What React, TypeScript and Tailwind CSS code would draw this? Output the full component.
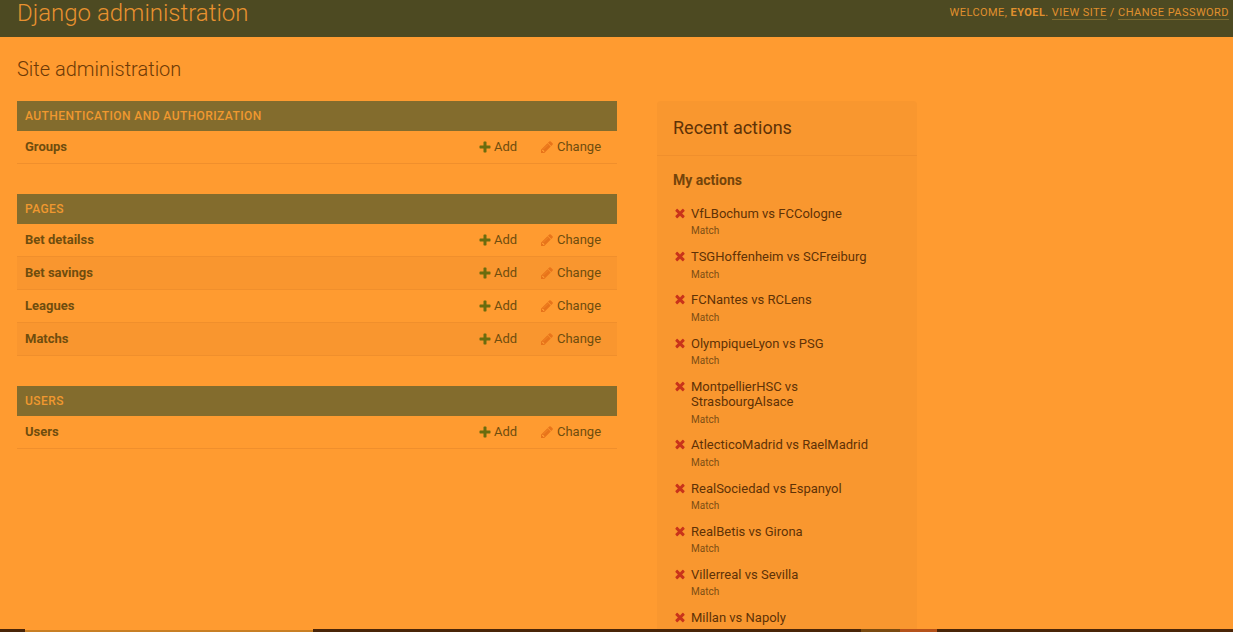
const modules = [
  { title: "AUTHENTICATION AND AUTHORIZATION", rows: ["Groups"] },
  { title: "PAGES", rows: ["Bet detailss", "Bet savings", "Leagues", "Matchs"] },
  { title: "USERS", rows: ["Users"] },
];

const actions = [
  "VfLBochum vs FCCologne",
  "TSGHoffenheim vs SCFreiburg",
  "FCNantes vs RCLens",
  "OlympiqueLyon vs PSG",
  "MontpellierHSC vs StrasbourgAlsace",
  "AtlecticoMadrid vs RaelMadrid",
  "RealSociedad vs Espanyol",
  "RealBetis vs Girona",
  "Villerreal vs Sevilla",
  "Millan vs Napoly",
];

function Icon({ d, className }: { d: string; className: string }) {
  return (
    <svg viewBox="0 0 1792 1792" className={className} fill="currentColor" aria-hidden="true">
      <path d={d} />
    </svg>
  );
}

const ADD =
  "M1600 796v192q0 40-28 68t-68 28h-416v416q0 40-28 68t-68 28h-192q-40 0-68-28t-28-68v-416h-416q-40 0-68-28t-28-68v-192q0-40 28-68t68-28h416v-416q0-40 28-68t68-28h192q40 0 68 28t28 68v416h416q40 0 68 28t28 68z";
const CHANGE =
  "M491 1536l91-91-235-235-91 91v107h128v128h107zm523-928q0-22-22-22-10 0-17 7l-542 542q-7 7-7 17 0 22 22 22 10 0 17-7l542-542q7-7 7-17zm-54-192l416 416-832 832h-416v-416zm683 96q0 53-37 90l-166 166-416-416 166-165q36-38 90-38 53 0 91 38l235 234q37 39 37 91z";
const DELETE =
  "M1490 1322q0 40-28 68l-136 136q-28 28-68 28t-68-28l-294-294-294 294q-28 28-68 28t-68-28l-136-136q-28-28-28-68t28-68l294-294-294-294q-28-28-28-68t28-68l136-136q28-28 68-28t68 28l294 294 294-294q28-28 68-28t68 28l136 136q28 28 28 68t-28 68l-294 294 294 294q28 28 28 68z";

export default function App() {
  return (
    <div className="relative h-screen overflow-hidden bg-[#ff9b30] font-['Roboto',sans-serif] text-[14px] text-[#7d4a0c]">
      <header className="flex h-[37px] items-start justify-between bg-[#4d4a22] pl-[17px] pr-[4px]">
        <h1 className="text-[24px] font-light leading-[26px] text-[#e8912f]">Django administration</h1>
        <div className="mt-[5px] text-[11px] leading-[16px] tracking-[0.44px] text-[#e0902e]">
          WELCOME, <strong className="font-bold">EYOEL</strong>.{" "}
          <span className="border-b border-[#7d6a30]">VIEW SITE</span> / <span className="border-b border-[#7d6a30]">CHANGE PASSWORD</span>
        </div>
      </header>

      <main className="px-[17px] pt-[20px]">
        <h2 className="text-[20px] font-light leading-[24px] text-[#6e3a06]">Site administration</h2>
        <div className="mt-[20px] flex gap-[40px]">
          <div className="w-[600px]">
            {modules.map((m) => (
              <section key={m.title} className="mb-[30px]">
                <div className="flex h-[30px] items-center bg-[#836c2d] px-[8px] text-[12px] font-medium leading-[16px] tracking-[0.43px] text-[#f0982f]">
                  {m.title}
                </div>
                {m.rows.map((r, i) => (
                  <div
                    key={r}
                    className={`flex h-[33px] items-center border-b border-[#f08f2c] pl-[8px] pr-[14px] ${i % 2 === 1 ? "bg-[#f9962f]" : ""}`}
                  >
                    <span className="flex-1 text-[13px] font-bold text-[#6f4d0e]">{r}</span>
                    <span className="flex w-[40px] items-center text-[13px] text-[#6f4d0e]">
                      <Icon d={ADD} className="mr-[2px] h-[14px] w-[14px] text-[#6a6c0e]" />
                      Add
                    </span>
                    <span className="ml-[22px] flex w-[63px] items-center text-[13px] text-[#6f4d0e]">
                      <Icon d={CHANGE} className="mr-[3px] h-[14px] w-[14px] text-[#e8741a]" />
                      Change
                    </span>
                  </div>
                ))}
              </section>
            ))}
          </div>

          <aside className="w-[260px] rounded-[4px] bg-[#f9972f] pb-[40px]">
            <h2 className="flex h-[55px] items-center border-b border-[#f08f2c] px-[16px] text-[18px] leading-[22px] text-[#5f3206]">
              Recent actions
            </h2>
            <h3 className="mt-[15px] px-[16px] text-[14px] font-bold leading-[18px] text-[#74440a]">My actions</h3>
            <ul className="mt-[17px] px-[16px]">
              {actions.map((a, i) => (
                <li key={a} className="mb-[10px] flex">
                  <Icon d={DELETE} className="h-[14px] w-[14px] shrink-0 text-[#c9331a]" />
                  <div className="ml-[4px]">
                    <div className="text-[13px] leading-[15.4px] text-[#5f3206]">{a}</div>
                    {i < actions.length - 1 && (
                      <div className="mt-[2px] text-[10px] leading-[15.8px] text-[#7d4e14]">Match</div>
                    )}
                  </div>
                </li>
              ))}
            </ul>
          </aside>
        </div>
      </main>

      <div className="absolute bottom-0 left-0 flex h-[3px] w-full bg-[#4a2508]">
        <div className="ml-[25px] h-full w-[288px] border-t border-[#ff9b30] bg-[#c97f24]" />
        <div className="ml-[548px] h-full w-[39px] bg-[#7a4a10]" />
        <div className="h-full w-[37px] bg-[#b5521a]" />
      </div>
    </div>
  );
}
